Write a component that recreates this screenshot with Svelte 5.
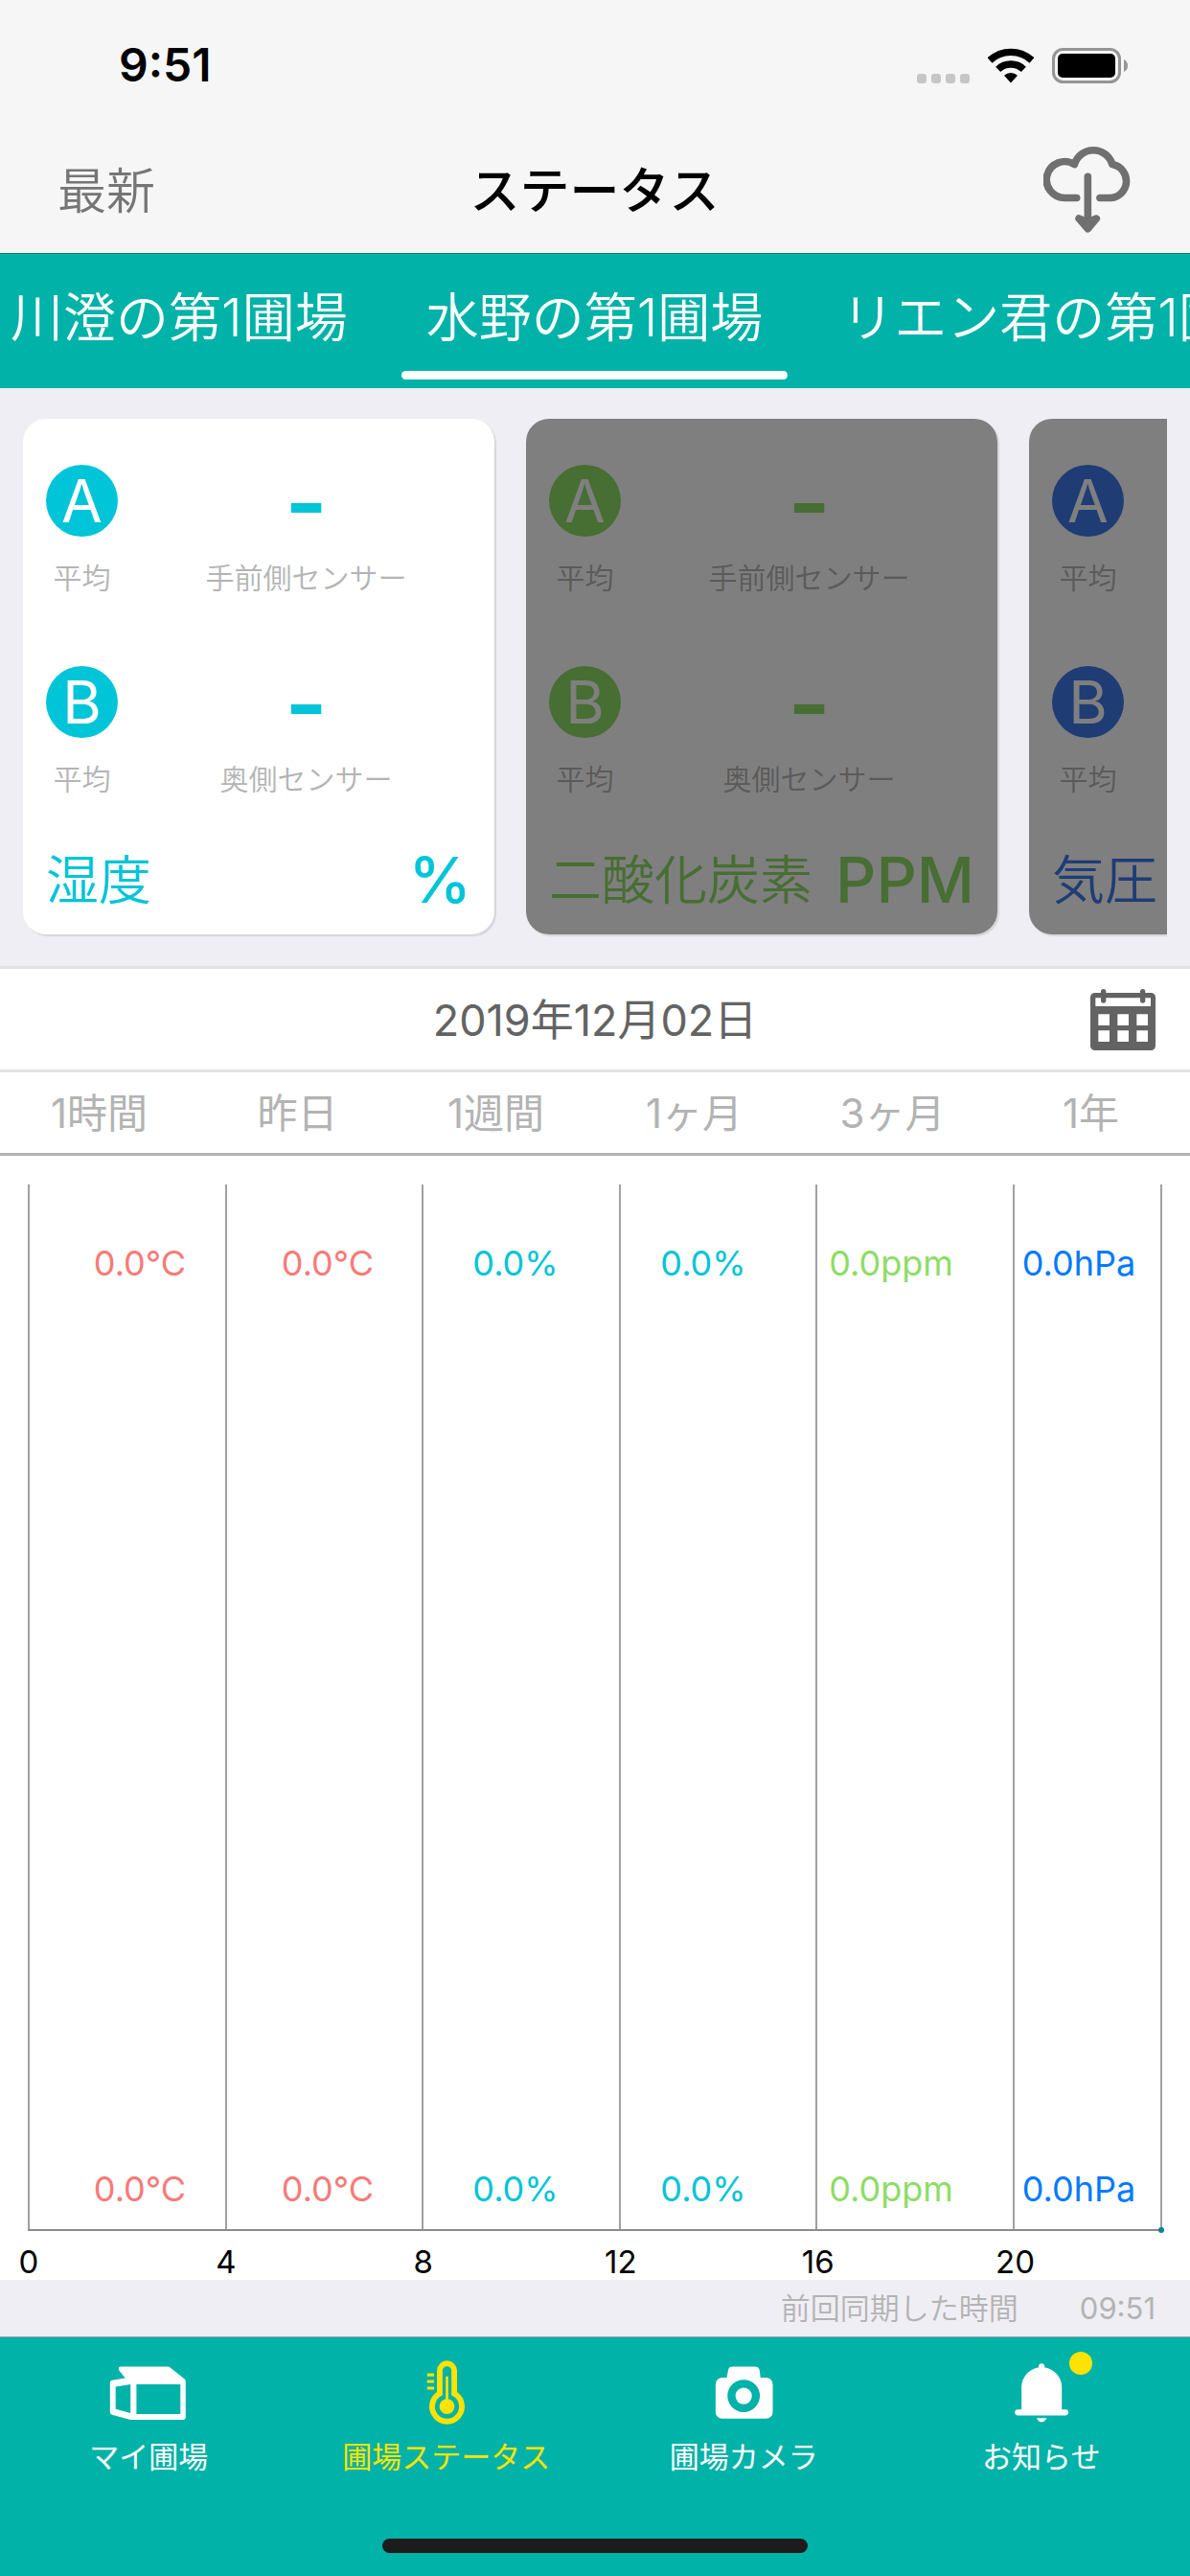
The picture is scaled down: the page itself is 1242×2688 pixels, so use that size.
<script lang="ts">
	import { onMount } from "svelte";

	interface Sensor {
		title: string;
		unit: string;
		tone: "humidity" | "co2" | "pressure";
	}

	interface Reading {
		text: string;
		tone: "temperature" | "humidity" | "co2" | "pressure";
	}

	const fields = ["川澄の第1圃場", "水野の第1圃場", "リエン君の第1圃場"];

	const sensors: Sensor[] = [
		{ title: "湿度", unit: "%", tone: "humidity" },
		{ title: "二酸化炭素", unit: "PPM", tone: "co2" },
		{ title: "気圧", unit: "hPa", tone: "pressure" },
	];

	const positions = [
		{ badge: "A", name: "手前側センサー" },
		{ badge: "B", name: "奥側センサー" },
	];

	const periods = ["1時間", "昨日", "1週間", "1ヶ月", "3ヶ月", "1年"];
	const hours = [0, 4, 8, 12, 16, 20];

	const readings: Reading[] = [
		{ text: "0.0°C", tone: "temperature" },
		{ text: "0.0°C", tone: "temperature" },
		{ text: "0.0%", tone: "humidity" },
		{ text: "0.0%", tone: "humidity" },
		{ text: "0.0ppm", tone: "co2" },
		{ text: "0.0hPa", tone: "pressure" },
	];

	const menu = [
		{ id: "field", label: "マイ圃場" },
		{ id: "status", label: "圃場ステータス" },
		{ id: "camera", label: "圃場カメラ" },
		{ id: "news", label: "お知らせ" },
	];

	let activeField = $state(1);
	let activeSensor = $state(0);
	let activeMenu = $state("status");
	let strip: HTMLElement;

	function centerField(index: number) {
		const tab = strip.children[index] as HTMLElement;
		strip.scrollLeft = tab.offsetLeft - (strip.clientWidth - tab.offsetWidth) / 2;
	}

	function selectField(index: number) {
		activeField = index;
		centerField(index);
	}

	onMount(() => centerField(activeField));
</script>

<div class="app">
	<header class="top">
		<div class="status">
			<span class="status__time">9:51</span>
			<div class="status__icons">
				<div class="status__signal"><i></i><i></i><i></i><i></i></div>
				<svg class="status__wifi" viewBox="0 0 144 110" aria-hidden="true">
					<path d="M6 38.5A96.5 96.5 0 0 1 138 38.5" fill="none" stroke="#000" stroke-width="22" />
					<path d="M32 66.5A58 58 0 0 1 112 66.5" fill="none" stroke="#000" stroke-width="22" />
					<path d="M72 109L51 86A31 31 0 0 1 93 86Z" />
				</svg>
				<svg class="status__battery" viewBox="0 0 80 37" aria-hidden="true">
					<rect x="1.5" y="1.5" width="69" height="34" rx="10" fill="none" stroke="#959595" stroke-width="3" />
					<rect x="6" y="6" width="60" height="25" rx="5" />
					<path d="M75 12q4 2 4 6.500t-4 6.500z" fill="#959595" />
				</svg>
			</div>
		</div>
		<div class="nav">
			<button type="button" class="nav__latest">最新</button>
			<h1 class="nav__title">ステータス</h1>
			<button type="button" class="nav__sync" aria-label="同期">
				<svg viewBox="0 0 276 280" fill="none" stroke="#707070" stroke-width="23" stroke-linecap="round" stroke-linejoin="round" aria-hidden="true">
					<path d="M104 170H68A57 57 0 1 1 97 65A62 62 0 0 1 216 65A53 53 0 0 1 212 170H177" />
					<path d="M139 103V262" />
					<path d="M111 235L139 267L166 235L139 247Z" fill="#707070" />
				</svg>
			</button>
		</div>
	</header>

	<nav class="fields" bind:this={strip}>
		{#each fields as field, index (field)}
			<button
				type="button"
				class="fields__tab"
				class:fields__tab--active={index === activeField}
				onclick={() => selectField(index)}
			>
				{field}
			</button>
		{/each}
	</nav>

	<section class="sensors">
		<div class="sensors__strip">
			{#each sensors as sensor, index (sensor.tone)}
				<button
					type="button"
					class="card card--{sensor.tone}"
					class:card--dimmed={index !== activeSensor}
					onclick={() => (activeSensor = index)}
				>
					{#each positions as position (position.badge)}
						<span class="card__row">
							<span class="card__badge">{position.badge}</span>
							<span class="card__value">-</span>
							<span class="card__label">平均</span>
							<span class="card__label">{position.name}</span>
						</span>
					{/each}
					<span class="card__foot">
						<span class="card__title">{sensor.title}</span>
						<span class="card__unit">{sensor.unit}</span>
					</span>
				</button>
			{/each}
		</div>
	</section>

	<div class="date">
		<span class="date__text">2019年12月02日</span>
		<button type="button" class="date__pick" aria-label="日付を選択">
			<svg viewBox="0 0 204 192" aria-hidden="true">
				<path
					fill="#636363"
					fill-rule="evenodd"
					d="M14 12H190a14 14 0 0 1 14 14V178a14 14 0 0 1-14 14H14a14 14 0 0 1-14-14V26a14 14 0 0 1 14-14ZM16 28V54H189V28ZM25 79V114H60V79ZM85 79V114H120V79ZM145 79V114H180V79ZM25 130V165H60V130ZM85 130V165H120V130ZM145 130V165H180V130Z"
				/>
				<path d="M41 8V36M164 8V36" stroke="#636363" stroke-width="16" stroke-linecap="round" />
			</svg>
		</button>
	</div>

	<div class="periods">
		{#each periods as period (period)}
			<button type="button">{period}</button>
		{/each}
	</div>

	<section class="chart">
		<div class="chart__plot">
			<div class="chart__grid">
				{#each hours as hour (hour)}
					<i></i>
				{/each}
			</div>
			<div class="chart__values">
				{#each ["max", "min"] as row (row)}
					<div class="chart__readings">
						{#each readings as reading}
							<span class="tone--{reading.tone}">{reading.text}</span>
						{/each}
					</div>
				{/each}
			</div>
			<i class="chart__point"></i>
		</div>
		<div class="chart__axis">
			{#each hours as hour (hour)}
				<span><b>{hour}</b></span>
			{/each}
		</div>
	</section>

	<div class="synced">
		<span class="synced__label">前回同期した時間</span>
		<time>09:51</time>
	</div>

	<nav class="menu">
		<div class="menu__items">
			{#each menu as item (item.id)}
				<a
					href="#{item.id}"
					class="menu__item"
					class:menu__item--active={item.id === activeMenu}
					onclick={() => (activeMenu = item.id)}
				>
					<span class="menu__icon">
						<svg viewBox="0 0 261 232" fill="currentColor" aria-hidden="true">
							{#if item.id === "field"}
								<path
									fill-rule="evenodd"
									d="M46 33H189Q193 33 196 36L239 70Q243 73 243 78V187Q243 194 236 194H78Q74 194 70 193L20 179Q14 177 14 171V82Q14 76 20 75L60 68L42 46Q40 43 40 40Q40 33 46 33ZM31 94V162L76 174V87ZM94 87V177H227V87Z"
								/>
							{:else if item.id === "status"}
								<path d="M110 115V46a22 22 0 0 1 44 0V115A45 45 0 1 1 110 115Z" fill="none" stroke="currentColor" stroke-width="17" />
								<circle cx="132" cy="154" r="23" />
								<path d="M128 63h8v80h-8zM72 54h21v9h-21zM72 74h21v9h-21zM72 94h21v9h-21z" />
							{:else if item.id === "camera"}
								<path
									fill-rule="evenodd"
									d="M66 67H80L84 44Q86 33 98 33H166Q177 33 179 44L182 67H199a20 20 0 0 1 20 20V171a20 20 0 0 1-20 20H66a20 20 0 0 1-20-20V87a20 20 0 0 1 20-20ZM131 73a49 49 0 1 0 0 98a49 49 0 1 0 0-98Z"
								/>
								<circle cx="131" cy="122" r="25" />
							{:else}
								<circle cx="131" cy="33" r="9" />
								<path d="M70 165V96a61 61 0 0 1 122 0V165ZM116 189H146Q141 201 131 201T116 189Z" />
								<rect x="50" y="163" width="162" height="18" rx="9" />
							{/if}
						</svg>
						{#if item.id === "news"}
							<i class="menu__dot"></i>
						{/if}
					</span>
					<span>{item.label}</span>
				</a>
			{/each}
		</div>
		<div class="menu__home"></div>
	</nav>
</div>

<style>
	:global(body) {
		margin: 0;
		background: #efeef4;
	}

	.app {
		display: flex;
		flex-direction: column;
		min-height: 100vh;
		background: #fff;
		font-family: Inter, "Noto Sans CJK JP", sans-serif;
		--teal: #00b2a7;
		--temperature: #f87a78;
		--humidity: #00c4d8;
		--co2: #8edc66;
		--pressure: #007aff;
	}

	button {
		margin: 0;
		border: 0;
		padding: 0;
		background: none;
		color: inherit;
		font: inherit;
		cursor: pointer;
	}

	svg {
		display: block;
	}

	.top {
		border-bottom: 1px solid #0a7d78;
		background: #f6f6f6;
	}

	.status {
		display: flex;
		align-items: center;
		justify-content: space-between;
		height: 132px;
		padding: 4px 64px 0 124px;
		box-sizing: border-box;
	}

	.status__time {
		font-size: 48px;
		font-weight: 600;
		line-height: 60px;
	}

	.status__icons {
		display: flex;
		align-items: flex-end;
		gap: 19px;
	}

	.status__signal {
		display: flex;
		gap: 5px;
	}

	.status__signal i {
		width: 10px;
		height: 10px;
		border-radius: 3px;
		background: #c6c6c6;
	}

	.status__wifi {
		width: 48px;
		height: 37px;
	}

	.status__battery {
		width: 80px;
		height: 37px;
	}

	.nav {
		display: grid;
		grid-template-columns: 1fr auto 1fr;
		align-items: center;
		height: 132px;
		padding: 0 61px 3px 60px;
		box-sizing: border-box;
	}

	.nav__latest,
	.nav__title {
		padding-top: 6px;
		line-height: 60px;
	}

	.nav__latest {
		justify-self: start;
		color: #757575;
		font-size: 51px;
		font-weight: 350;
	}

	.nav__title {
		margin: 0;
		font-size: 52px;
		font-weight: 500;
	}

	.nav__sync {
		justify-self: end;
	}

	.nav__sync svg {
		width: 92px;
		height: 93px;
	}

	.fields {
		position: relative;
		display: flex;
		gap: 30px;
		overflow-x: auto;
		scrollbar-width: none;
		background: var(--teal);
		color: #fff;
	}

	.fields__tab {
		flex: none;
		padding: 36px 26px 9px;
		font-size: 55px;
		font-weight: 350;
		line-height: 60px;
		white-space: nowrap;
	}

	.fields__tab::after {
		content: "";
		display: block;
		height: 9px;
		margin: 26px -26px 0;
		border-radius: 5px;
	}

	.fields__tab--active::after {
		background: #fff;
	}

	.sensors {
		padding: 32px 24px 30px;
		background: #efeef4;
	}

	.sensors__strip {
		display: flex;
		gap: 33px;
		padding-bottom: 3px;
		overflow-x: auto;
		scrollbar-width: none;
	}

	.card {
		position: relative;
		display: flex;
		flex: none;
		flex-direction: column;
		width: 492px;
		padding: 48px 0 21px 24px;
		border-radius: 24px;
		background: #fff;
		box-shadow: 2px 2px 1px #d6d6da;
		overflow: hidden;
	}

	.card--humidity {
		--tone: var(--humidity);
	}

	.card--co2 {
		--tone: var(--co2);
	}

	.card--pressure {
		--tone: #3e78ea;
	}

	.card--dimmed::after {
		content: "";
		position: absolute;
		inset: 0;
		background: rgb(0 0 0 / 50%);
	}

	.card__row {
		display: grid;
		grid-template-columns: 75px 1fr;
		row-gap: 25px;
		justify-items: center;
		align-items: center;
		margin-bottom: 74px;
	}

	.card__row:nth-child(2) {
		margin-bottom: 51px;
	}

	.card__badge {
		width: 75px;
		border-radius: 50%;
		background: var(--tone);
		color: #fff;
		font-size: 62px;
		line-height: 75px;
	}

	.card__value {
		height: 75px;
		color: var(--tone);
		font-size: 96px;
		font-weight: 600;
		line-height: 78px;
	}

	.card__label {
		color: #b4b4b4;
		font-size: 30px;
		font-weight: 350;
		line-height: 36px;
		white-space: nowrap;
	}

	.card__foot {
		display: flex;
		align-items: center;
		justify-content: space-between;
		padding-right: 24px;
		color: var(--tone);
		line-height: 72px;
	}

	.card__title {
		font-size: 55px;
		font-weight: 350;
	}

	.card__unit {
		font-size: 66px;
		font-weight: 500;
	}

	.date {
		display: grid;
		grid-template-columns: 1fr auto 1fr;
		align-items: center;
		height: 105px;
		padding: 0 36px;
		border-top: 3px solid #e2e2e2;
		border-bottom: 3px solid #e2e2e2;
	}

	.date__text {
		grid-column: 2;
		padding-top: 2px;
		color: #636363;
		font-size: 45px;
		line-height: 60px;
	}

	.date__pick {
		justify-self: end;
	}

	.date__pick svg {
		width: 68px;
		height: 64px;
	}

	.periods {
		display: grid;
		grid-template-columns: repeat(6, minmax(0, 1fr));
		border-bottom: 3px solid #b2b2b2;
	}

	.periods button {
		padding-top: 2px;
		color: #b3b3b3;
		font-size: 42px;
		line-height: 82px;
	}

	.chart {
		display: flex;
		flex: 1;
		flex-direction: column;
		padding: 30px 29px 0;
	}

	.chart__plot {
		position: relative;
		display: grid;
		flex: 1;
		min-height: 400px;
		border-bottom: 2px solid #8c8c8c;
	}

	.chart__grid,
	.chart__values {
		grid-area: 1 / 1;
	}

	.chart__grid,
	.chart__axis {
		display: grid;
		grid-template-columns: repeat(5, minmax(0, 4fr)) minmax(0, 3fr);
	}

	.chart__grid {
		border-right: 2px solid #a0a0a0;
	}

	.chart__grid i {
		border-left: 2px solid #a0a0a0;
	}

	.chart__values {
		display: flex;
		flex-direction: column;
		justify-content: space-between;
		margin-right: -11px;
		padding: 62px 0 22px 19px;
	}

	.chart__readings {
		display: grid;
		grid-template-columns: repeat(6, minmax(0, 1fr));
		font-size: 36px;
		line-height: 40px;
		text-align: center;
	}

	.tone--temperature {
		color: var(--temperature);
	}

	.tone--humidity {
		color: var(--humidity);
	}

	.tone--co2 {
		color: var(--co2);
	}

	.tone--pressure {
		color: var(--pressure);
	}

	.chart__point {
		position: absolute;
		right: -2px;
		bottom: -4px;
		width: 6px;
		height: 6px;
		border-radius: 50%;
		background: #0a8290;
	}

	.chart__axis {
		padding: 15px 0 2px;
		font-size: 33px;
		line-height: 34px;
	}

	.chart__axis span {
		display: flex;
		justify-content: center;
		width: 2px;
	}

	.chart__axis b {
		font-weight: 400;
	}

	.synced {
		display: flex;
		align-items: center;
		justify-content: flex-end;
		gap: 64px;
		height: 59px;
		padding: 0 36px;
		border-bottom: 1px solid #9a9aa4;
		background: #efeef4;
		color: #b3b3b3;
		font-size: 31px;
		line-height: 36px;
	}

	.synced__label {
		font-weight: 350;
	}

	.menu {
		padding: 19px 0 24px;
		background: var(--teal);
	}

	.menu__items {
		display: grid;
		grid-template-columns: repeat(4, minmax(0, 1fr));
	}

	.menu__item {
		display: flex;
		flex-direction: column;
		align-items: center;
		gap: 8px;
		color: #fff;
		font-size: 31px;
		line-height: 36px;
		text-decoration: none;
	}

	.menu__item--active {
		color: #ffe300;
	}

	.menu__icon {
		position: relative;
	}

	.menu__icon svg {
		width: 90px;
		height: 80px;
	}

	.menu__dot {
		position: absolute;
		top: -4px;
		right: -8px;
		width: 24px;
		height: 24px;
		border-radius: 50%;
		background: #ffe300;
	}

	.menu__home {
		width: 444px;
		height: 15px;
		margin: 67px auto 0;
		border-radius: 8px;
		background: #1c1c1c;
	}
</style>
